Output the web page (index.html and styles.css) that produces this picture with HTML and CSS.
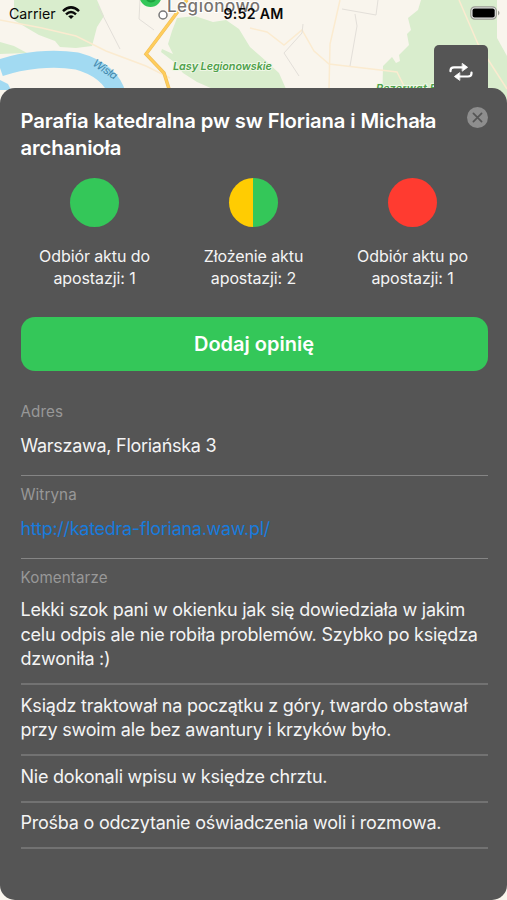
FILE: index.html
```html
<!DOCTYPE html>
<html lang="pl">
<head>
<meta charset="utf-8">
<title>Parafia</title>
<link rel="stylesheet" href="styles.css">
</head>
<body>
<div class="screen">
  <svg class="map" width="507" height="110" viewBox="0 0 507 110" aria-hidden="true">
    <rect width="507" height="110" fill="#f9f5ed"/>
    <g fill="#d9edcd">
      <path d="M14 0H97L104 16L97 27L92 46L76 48L60 47L55 41L39 35L27 28L14 20Z"/>
      <path d="M0 42L14 46L27 53L0 54Z"/>
      <path d="M177 18L195 16L213 22L226 20L239 29L250 47L266 61L279 73L286 89H213L197 82L183 73L174 62L161 52L162 49L173 54L168 44L172 31Z"/>
      <path d="M421 0H497V38L507 56V110H382L383 66L392 57L396 63L400 61L399 55L409 45L407 34L411 30L408 18L418 10Z"/>
    </g>
    <g fill="none" stroke="#fbebd0" stroke-width="1.5">
      <path d="M0 20L42 28L76 36L106 51L146 66L170 78"/>
      <path d="M250 28L267 32L284 45L302 30L314 51L329 64L397 72L405 88"/>
      <path d="M340 0L330 44L329 89M459 0L478 44L507 89"/>
    </g>
    <g fill="none" stroke="#e3dfd9">
      <path d="M98 6L120 49M140 0L139 19L154 30M303 24L302 33L284 53L299 76M342 9L376 15L378 0M355 14L357 26L350 66"/>
    </g>
    <path d="M0 68C23 60 52 57 77 61C99 67 113 78 118 96" fill="none" stroke="#a2daf2" stroke-width="17"/>
    <path d="M0 80L8 84L11 90H0Z" fill="#a2daf2"/>
    <path d="M187 0L176 14L146 54L164 73L170 92" fill="none" stroke="#f0bf58" stroke-width="3.500"/>
    <path d="M187 0L176 14L146 54L164 73L170 92" fill="none" stroke="#ffcd5c" stroke-width="2.200"/>
    <circle cx="150.500" cy="-4" r="11" fill="#34c759"/>
    <path d="M147 0Q151 3 155 0" fill="none" stroke="#1ba13d" stroke-width="2"/>
    <circle cx="163" cy="15" r="4" fill="#fff" stroke="#777" stroke-width="1.500"/>
    <text class="map-city" x="167" y="12" textLength="93">Legionowo</text>
    <text class="map-park" x="173" y="70" textLength="99">Lasy Legionowskie</text>
    <text class="map-park" x="376" y="92" textLength="68">Rezerwat Bu</text>
    <text class="map-river" transform="translate(92 65) rotate(34)" textLength="27">Wisła</text>
  </svg>

  <header class="status">
    <div class="carrier"><span class="carrier-name">Carrier</span>
      <svg width="18" height="14" viewBox="0 0 18 14" fill="none" stroke="#090909" stroke-width="2.500"><path d="M1 5.100Q9-2.300 17 5.100M4 8.300Q9 3.700 14 8.300"/><path d="M6.200 10.300Q9 8 11.800 10.300L9 13Z" fill="#090909" stroke="none"/></svg>
    </div>
    <time class="clock">9:52 AM</time>
    <svg class="battery" width="31" height="14" viewBox="0 0 31 14"><rect x=".8" y=".8" width="25.500" height="12.400" rx="4" fill="#eee" stroke="#999b93" stroke-width="1.200"/><rect x="2.500" y="2.500" width="22.200" height="9" rx="2" fill="#000"/><path d="M28 4.500Q31 7 28 9.500Z" fill="#999b93"/></svg>
  </header>

  <div class="tab-row">
    <button class="tab" aria-label="Przełącz">
      <svg width="24" height="20" viewBox="0 0 24 20" fill="none" stroke="#fff" stroke-width="2.200" stroke-linecap="round"><path d="M1.500 9.200V8.500Q1.500 5.300 5 5.300H14M22.500 10.500V11.200Q22.500 14.500 19 14.500H10"/><path d="M13.500 1.600L18.600 5.300L13.500 9ZM10.500 10.800L5.400 14.500L10.500 18.200Z" fill="#fff" stroke-width=".8" stroke-linejoin="round"/></svg>
    </button>
  </div>

  <main class="sheet">
    <div class="heading">
      <h1>Parafia katedralna pw sw Floriana i Michała<br>archanioła</h1>
      <button class="close" aria-label="Zamknij"><svg width="21" height="21" viewBox="0 0 21 21"><circle cx="10.500" cy="10.500" r="10.500" fill="#8e8e8e"/><path d="M6.400 6.400L14.600 14.600M14.600 6.400L6.400 14.600" stroke="#555" stroke-width="1.700" stroke-linecap="round"/></svg></button>
    </div>
    <div class="stats">
      <div class="stat"><i class="dot green"></i><p>Odbiór aktu do<br>apostazji: 1</p></div>
      <div class="stat"><i class="dot split"></i><p>Złożenie aktu<br>apostazji: 2</p></div>
      <div class="stat"><i class="dot red"></i><p>Odbiór aktu po<br>apostazji: 1</p></div>
    </div>
    <button class="add">Dodaj opinię</button>
    <section class="field"><h2>Adres</h2><p class="address">Warszawa, Floriańska 3</p></section>
    <section class="field"><h2>Witryna</h2><p class="link">http://katedra-floriana.waw.pl/</p></section>
    <section class="comments">
      <h2>Komentarze</h2>
      <p class="comment first">Lekki szok pani w okienku jak się dowiedziała w jakim<br>celu odpis ale nie robiła problemów. Szybko po księdza<br>dzwoniła :)</p>
      <p class="comment">Ksiądz traktował na początku z góry, twardo obstawał<br>przy swoim ale bez awantury i krzyków było.</p>
      <p class="comment">Nie dokonali wpisu w księdze chrztu.</p>
      <p class="comment">Prośba o odczytanie oświadczenia woli i rozmowa.</p>
    </section>
  </main>
</div>
</body>
</html>
```
FILE: styles.css
```css
* { box-sizing: border-box; }
body { margin: 0; font-family: Inter, "Liberation Sans", sans-serif; }
h1, h2, p { margin: 0; white-space: nowrap; }
button { border: 0; padding: 0; font-family: inherit; }
svg { display: block; }

.screen {
  position: relative;
  width: 507px;
  height: 900px;
  overflow: hidden;
  background: #f9f5ed;
  display: flex;
  flex-direction: column;
}
.map { position: absolute; left: 0; top: 0; }
.map-city { font-size: 17px; font-weight: 500; fill: #77736f; stroke: #fff; stroke-width: 2px; paint-order: stroke; }
.map-park { font-size: 11px; font-weight: 600; font-style: italic; fill: #4ea14b; stroke: #eef7e5; stroke-width: 2px; paint-order: stroke; }
.map-river { font-size: 11px; font-style: italic; fill: #4389ad; }

.status {
  position: relative;
  height: 45px;
  padding: 6px 6px 0 9px;
  display: grid;
  grid-template-columns: 1fr auto 1fr;
  align-items: start;
  color: #090909;
}
.carrier { display: flex; gap: 6px; font-size: 14.2px; line-height: 16px; }
.clock { font-size: 14.2px; line-height: 16px; font-weight: 600; margin-left: -3px; letter-spacing: 0.25px; }
.battery { justify-self: end; }

.tab-row { position: relative; height: 43px; padding-right: 19px; display: flex; justify-content: flex-end; }
.tab {
  width: 54px;
  height: 54px;
  background: #555;
  border-radius: 5px;
  display: flex;
  justify-content: center;
  padding-top: 17px;
}

.sheet {
  position: relative;
  flex: 1;
  background: #555;
  border-radius: 15px;
  padding: 19px 19.5px 0 20.5px;
  color: #f4f4f4;
}
.heading { display: flex; justify-content: space-between; height: 71px; }
h1 { font-size: 20.3px; line-height: 27px; font-weight: 600; letter-spacing: -0.14px; color: #fff; }
.close { width: 21px; height: 21px; background: none; }

.stats { display: grid; grid-template-columns: repeat(3, 1fr); height: 138.5px; margin: 0 -4.5px 0 -5.5px; }
.stat { display: flex; flex-direction: column; align-items: center; text-align: center; }
.dot { width: 49px; height: 49px; border-radius: 50%; }
.green { background: #34c759; }
.split { background: linear-gradient(90deg, #ffcc02 50%, #34c759 50%); }
.red { background: #ff3b30; }
.stat p { margin-top: 17.5px; font-size: 16px; line-height: 22px; letter-spacing: -0.1px; }

.add {
  display: block;
  width: 100%;
  height: 54px;
  border-radius: 14px;
  background: #34c759;
  color: #fff;
  font-size: 20px;
  font-weight: 600;
}

h2 { font-size: 15.2px; line-height: 20px; font-weight: 400; letter-spacing: 0.1px; color: #989898; }
.field { height: 83px; border-bottom: 1px solid #858585; padding-top: 9px; }
.add + .field { height: 105.5px; padding-top: 31.5px; }
.field p { margin-top: 10.5px; font-size: 18px; line-height: 25px; letter-spacing: -0.28px; }
.field .link { color: #187bdc; letter-spacing: -0.28px; }
.comments { padding-top: 9px; }
.comment { font-size: 18px; line-height: 24.5px; letter-spacing: -0.23px; padding: 8.5px 0 11.5px; border-bottom: 2px solid #727272; }
.comment.first { padding-top: 10px; padding-bottom: 11.5px; }
```
